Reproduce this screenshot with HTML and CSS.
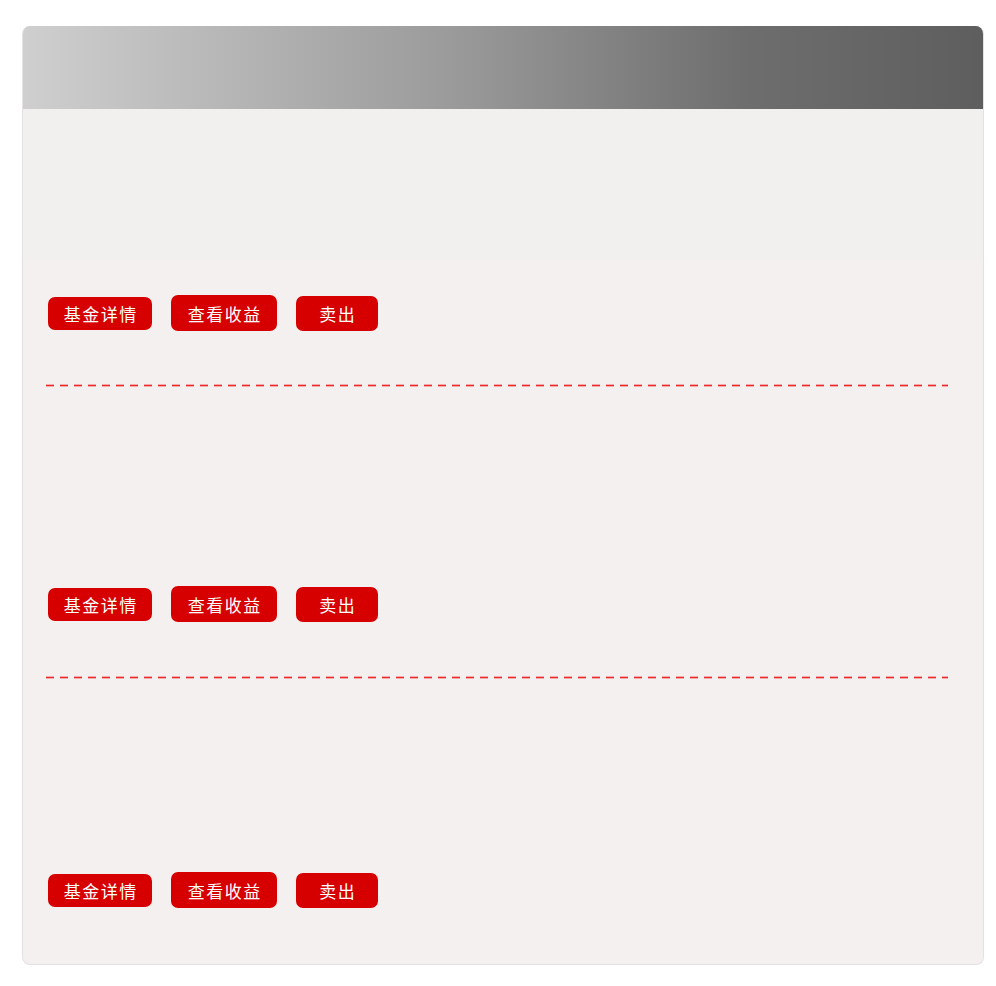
FILE: index.html
```html
<!DOCTYPE html>
<html lang="zh-CN">
<head>
<meta charset="utf-8">
<title>基金</title>
<link rel="stylesheet" href="styles.css">
</head>
<body>
<div class="card">
  <div class="card-head"></div>
  <div class="card-body">
    <div class="item item-first">
      <div class="info info-first"></div>
      <div class="actions actions-first">
        <a class="btn btn-detail">基金详情</a>
        <a class="btn btn-income">查看收益</a>
        <a class="btn btn-sell">卖出</a>
      </div>
      <div class="dash"></div>
    </div>
    <div class="item">
      <div class="info info-second"></div>
      <div class="actions">
        <a class="btn btn-detail">基金详情</a>
        <a class="btn btn-income">查看收益</a>
        <a class="btn btn-sell">卖出</a>
      </div>
      <div class="dash"></div>
    </div>
    <div class="item">
      <div class="info info-third"></div>
      <div class="actions actions-last">
        <a class="btn btn-detail">基金详情</a>
        <a class="btn btn-income">查看收益</a>
        <a class="btn btn-sell">卖出</a>
      </div>
    </div>
  </div>
</div>
</body>
</html>
```

FILE: styles.css
```css
html, body {
  margin: 0;
  padding: 0;
  background: #ffffff;
  font-family: "Noto Sans CJK SC", "Noto Sans", sans-serif;
}

.card {
  margin: 26px 0 0 22px;
  width: 960px;
  border: 1px solid #e3e1e1;
  border-top: none;
  border-radius: 8px;
  overflow: hidden;
  background: #f4f0f0;
}

.card-head {
  height: 83px;
  background: linear-gradient(to right, #d0cfd0 0%, #9a9a9a 45%, #6e6e6e 75%, #5e5e5e 100%);
}

.card-body {
  display: flex;
  flex-direction: column;
}

.info-first {
  height: 151px;
  background: #f2f0ef;
}

.info-second {
  height: 199px;
}

.info-third {
  height: 193px;
}

.actions {
  display: flex;
  align-items: center;
  gap: 19px;
  height: 36px;
  padding: 0 0 0 25px;
  margin-bottom: 54px;
}

.actions-first {
  margin-top: 35px;
  margin-bottom: 53px;
}

.actions-last {
  margin-bottom: 56px;
}

.btn {
  display: flex;
  align-items: center;
  justify-content: center;
  box-sizing: border-box;
  background: #d70000;
  color: #ffffff;
  font-size: 17px;
  letter-spacing: 1.5px;
  text-indent: 1.5px;
  border-radius: 7px;
  cursor: pointer;
}

.btn-detail {
  width: 104px;
  height: 33px;
  margin-top: 1px;
}

.btn-income {
  width: 106px;
  height: 36px;
}

.btn-sell {
  width: 82px;
  height: 35px;
  margin-top: 1px;
}

.dash {
  height: 3px;
  margin: 0 35px 0 23px;
  background-image:
    linear-gradient(to bottom, rgba(244, 240, 240, 0.65) 1px, rgba(244, 240, 240, 0) 1px, rgba(244, 240, 240, 0) 2px, rgba(244, 240, 240, 0.65) 2px),
    linear-gradient(to right, #ee2a2a 8px, #f4f0f0 8px);
  background-size: 100% 3px, 14px 3px;
  background-repeat: no-repeat, repeat-x;
}
```
